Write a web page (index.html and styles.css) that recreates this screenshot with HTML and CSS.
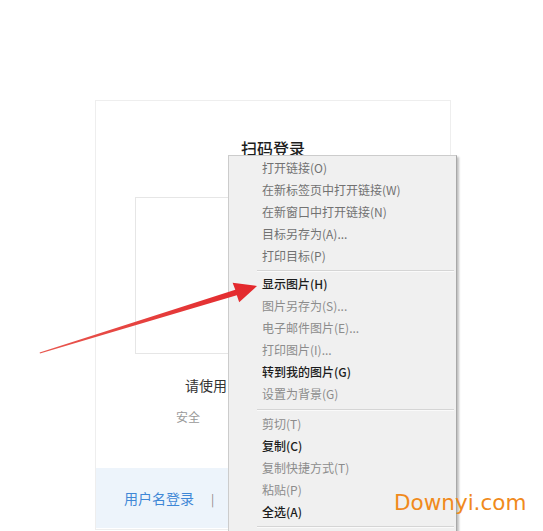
FILE: index.html
```html
<!DOCTYPE html>
<html lang="zh-CN">
<head>
<meta charset="utf-8">
<link rel="stylesheet" href="styles.css">
</head>
<body>
<div class="page">
  <div class="card">
    <div class="title">扫码登录</div>
    <div class="qr"></div>
    <div class="hint">请使用</div>
    <div class="safe">安全</div>
    <div class="footer">
      <span class="tab">用户名登录</span>
      <span class="bar">|</span>
    </div>
  </div>

  <div class="menu">
    <div class="item">打开链接(O)</div>
    <div class="item">在新标签页中打开链接(W)</div>
    <div class="item">在新窗口中打开链接(N)</div>
    <div class="item">目标另存为(A)...</div>
    <div class="item">打印目标(P)</div>
    <div class="sep"></div>
    <div class="item strong">显示图片(H)</div>
    <div class="item dim">图片另存为(S)...</div>
    <div class="item dim">电子邮件图片(E)...</div>
    <div class="item dim">打印图片(I)...</div>
    <div class="item strong">转到我的图片(G)</div>
    <div class="item dim">设置为背景(G)</div>
    <div class="sep sep2"></div>
    <div class="item dim">剪切(T)</div>
    <div class="item strong">复制(C)</div>
    <div class="item dim">复制快捷方式(T)</div>
    <div class="item dim">粘贴(P)</div>
    <div class="item strong">全选(A)</div>
    <div class="sep"></div>
  </div>

  <svg class="arrow" width="543" height="531" viewBox="0 0 543 531">
    <defs>
      <linearGradient id="ag" x1="0" y1="1" x2="1" y2="0">
        <stop offset="0" stop-color="#e8584f"/>
        <stop offset="1" stop-color="#e3262b"/>
      </linearGradient>
    </defs>
    <polygon fill="url(#ag)" points="40,353.6 39.6,352.6 235.3,289.8 232.6,282.8 257,286 239.2,302.2 236.8,295.2"/>
  </svg>

  <div class="mark">Downyi.com</div>
</div>
</body>
</html>
```

FILE: styles.css
```css
html, body {
  margin: 0;
  padding: 0;
  background: #ffffff;
}

body {
  font-family: "Noto Sans CJK SC", "Noto Sans", sans-serif;
  color: #333333;
}

.page {
  position: relative;
  width: 543px;
  height: 531px;
  overflow: hidden;
  padding-top: 100px;
  box-sizing: border-box;
}

.card {
  margin-left: 95px;
  width: 356px;
  height: 430px;
  border: 1px solid #eeeeee;
  box-sizing: border-box;
  display: flex;
  flex-direction: column;
}

.title {
  margin-top: 37px;
  text-align: center;
  font-size: 16px;
  line-height: 20px;
  color: #1e1e1e;
  font-weight: 500;
}

.qr {
  margin: 39px 39px 0 39px;
  height: 157px;
  border: 1px solid #e6e6e6;
  box-sizing: border-box;
}

.hint {
  margin-top: 21px;
  padding-left: 89px;
  font-size: 14px;
  line-height: 20px;
  color: #333333;
  white-space: nowrap;
}

.safe {
  margin-top: 14px;
  padding-left: 80px;
  font-size: 12px;
  line-height: 16px;
  color: #999999;
  white-space: nowrap;
}

.footer {
  margin-top: auto;
  margin-bottom: 1px;
  height: 60px;
  background: #edf4fb;
  display: flex;
  align-items: center;
  padding-left: 28px;
  font-size: 14px;
}

.tab {
  color: #3f87d6;
}

.bar {
  margin-left: 17px;
  color: #888888;
  font-size: 12px;
}

.menu {
  position: absolute;
  left: 228px;
  top: 155px;
  width: 229px;
  height: 400px;
  box-sizing: border-box;
  background: #f0f0f0;
  border: 1px solid #cccccc;
  border-right-color: #a8a8a8;
  box-shadow: 2px 2px 2px rgba(0, 0, 0, 0.25);
  padding-top: 1px;
}

.item {
  height: 22px;
  line-height: 22px;
  padding-left: 33px;
  font-size: 12px;
  color: #727272;
  white-space: nowrap;
}

.item.dim {
  color: #8c8c8c;
}

.item.strong {
  color: #1c1c1c;
  font-weight: 500;
}

.sep {
  margin: 3px 2px 1px 28px;
  height: 1px;
  background: #d5d5d5;
  border-bottom: 1px solid #fafafa;
}

.sep2 {
  margin-top: 4px;
  margin-bottom: 2px;
}

.arrow {
  position: absolute;
  left: 0;
  top: 0;
}

.mark {
  position: absolute;
  left: 394px;
  top: 490px;
  font-family: "DejaVu Sans", sans-serif;
  font-size: 21.5px;
  line-height: 26px;
  color: #f08a1c;
}
```
